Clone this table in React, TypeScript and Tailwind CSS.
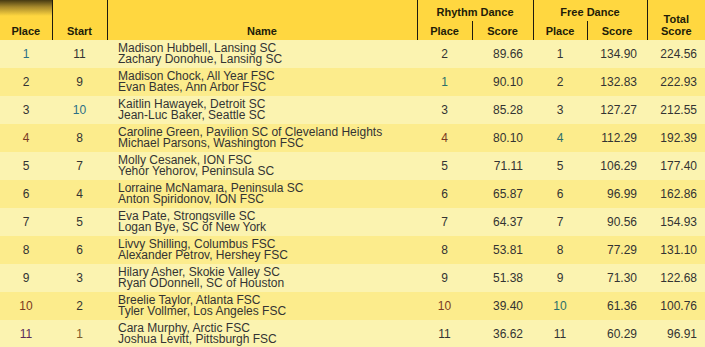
const rows = [
  { place: "1", start: "11", a: "Madison Hubbell, Lansing SC", b: "Zachary Donohue, Lansing SC", rp: "2", rs: "89.66", fp: "1", fs: "134.90", total: "224.56" },
  { place: "2", start: "9", a: "Madison Chock, All Year FSC", b: "Evan Bates, Ann Arbor FSC", rp: "1", rs: "90.10", fp: "2", fs: "132.83", total: "222.93" },
  { place: "3", start: "10", a: "Kaitlin Hawayek, Detroit SC", b: "Jean-Luc Baker, Seattle SC", rp: "3", rs: "85.28", fp: "3", fs: "127.27", total: "212.55" },
  { place: "4", start: "8", a: "Caroline Green, Pavilion SC of Cleveland Heights", b: "Michael Parsons, Washington FSC", rp: "4", rs: "80.10", fp: "4", fs: "112.29", total: "192.39" },
  { place: "5", start: "7", a: "Molly Cesanek, ION FSC", b: "Yehor Yehorov, Peninsula SC", rp: "5", rs: "71.11", fp: "5", fs: "106.29", total: "177.40" },
  { place: "6", start: "4", a: "Lorraine McNamara, Peninsula SC", b: "Anton Spiridonov, ION FSC", rp: "6", rs: "65.87", fp: "6", fs: "96.99", total: "162.86" },
  { place: "7", start: "5", a: "Eva Pate, Strongsville SC", b: "Logan Bye, SC of New York", rp: "7", rs: "64.37", fp: "7", fs: "90.56", total: "154.93" },
  { place: "8", start: "6", a: "Livvy Shilling, Columbus FSC", b: "Alexander Petrov, Hershey FSC", rp: "8", rs: "53.81", fp: "8", fs: "77.29", total: "131.10" },
  { place: "9", start: "3", a: "Hilary Asher, Skokie Valley SC", b: "Ryan ODonnell, SC of Houston", rp: "9", rs: "51.38", fp: "9", fs: "71.30", total: "122.68" },
  { place: "10", start: "2", a: "Breelie Taylor, Atlanta FSC", b: "Tyler Vollmer, Los Angeles FSC", rp: "10", rs: "39.40", fp: "10", fs: "61.36", total: "100.76" },
  { place: "11", start: "1", a: "Cara Murphy, Arctic FSC", b: "Joshua Levitt, Pittsburgh FSC", rp: "11", rs: "36.62", fp: "11", fs: "60.29", total: "96.91" },
];

// little colour fringes seen on some digits in the screenshot
function tint(v: string, kind: "place" | "start" | "rp" | "fp") {
  if (kind === "place") {
    if (v === "1") return "text-[#2b6f86]";
    if (v === "4" || v === "10") return "text-[#7a3b22]";
    if (v === "11") return "text-[#5a2a5a]";
  }
  if (kind === "start") {
    if (v === "10") return "text-[#2b6f86]";
    if (v === "1") return "text-[#7a5a2a]";
  }
  if (kind === "rp") {
    if (v === "1") return "text-[#2b6f6a]";
    if (v === "10" || v === "4") return "text-[#7a3b22]";
  }
  if (kind === "fp") {
    if (v === "4" || v === "10") return "text-[#2b6f6a]";
  }
  return "text-[#333]";
}

export default function App() {
  return (
    <div className="h-[347px] w-[705px] overflow-hidden bg-[#fbf3b0] font-['Liberation_Sans',Arial,sans-serif] text-[12px] leading-[11px] text-[#333]">
      <table className="w-[705px] table-fixed border-collapse">
        <colgroup>
          <col className="w-[52px]" />
          <col className="w-[55px]" />
          <col className="w-[310px]" />
          <col className="w-[55px]" />
          <col className="w-[61px]" />
          <col className="w-[54px]" />
          <col className="w-[60px]" />
          <col className="w-[58px]" />
        </colgroup>
        <thead className="bg-[#ffd740] text-[11px] font-bold leading-[12px] text-[#221c08]">
          <tr className="h-[21px]">
            <th
              rowSpan={2}
              className="border-r border-[#1e1a0e] bg-[linear-gradient(to_bottom,#463a12_0px,#a88a2c_7px,#ffd740_16px)] pb-[3px] align-bottom"
            >
              Place
            </th>
            <th rowSpan={2} className="border-r border-[#1e1a0e] pb-[3px] align-bottom">
              Start
            </th>
            <th rowSpan={2} className="border-r border-[#1e1a0e] pb-[3px] align-bottom">
              Name
            </th>
            <th colSpan={2} className="border-r border-[#1e1a0e] pb-[3px] align-bottom">
              Rhythm Dance
            </th>
            <th colSpan={2} className="border-r border-[#1e1a0e] pb-[3px] align-bottom">
              Free Dance
            </th>
            <th rowSpan={2} className="pb-[3px] align-bottom">
              Total
              <br />
              Score
            </th>
          </tr>
          <tr className="h-[19px]">
            <th className="border-r border-[#1e1a0e] pb-[3px] align-bottom">Place</th>
            <th className="border-r border-[#1e1a0e] pb-[3px] align-bottom">Score</th>
            <th className="border-r border-[#1e1a0e] pb-[3px] align-bottom">Place</th>
            <th className="border-r border-[#1e1a0e] pb-[3px] align-bottom">Score</th>
          </tr>
        </thead>
        <tbody>
          {rows.map((r, i) => (
            <tr key={r.place} className={i % 2 === 0 ? "h-[28px] bg-[#fbf3b0]" : "h-[28px] bg-[#fcec8c]"}>
              <td className={`text-center ${tint(r.place, "place")}`}>{r.place}</td>
              <td className={`text-center ${tint(r.start, "start")}`}>{r.start}</td>
              <td className="whitespace-nowrap pl-[11px]">
                <div>{r.a}</div>
                <div>{r.b}</div>
              </td>
              <td className={`text-center ${tint(r.rp, "rp")}`}>{r.rp}</td>
              <td className="pr-[10px] text-right">{r.rs}</td>
              <td className={`text-center ${tint(r.fp, "fp")}`}>{r.fp}</td>
              <td className="pr-[10px] text-right">{r.fs}</td>
              <td className="pr-[8px] text-right">{r.total}</td>
            </tr>
          ))}
        </tbody>
      </table>
    </div>
  );
}
